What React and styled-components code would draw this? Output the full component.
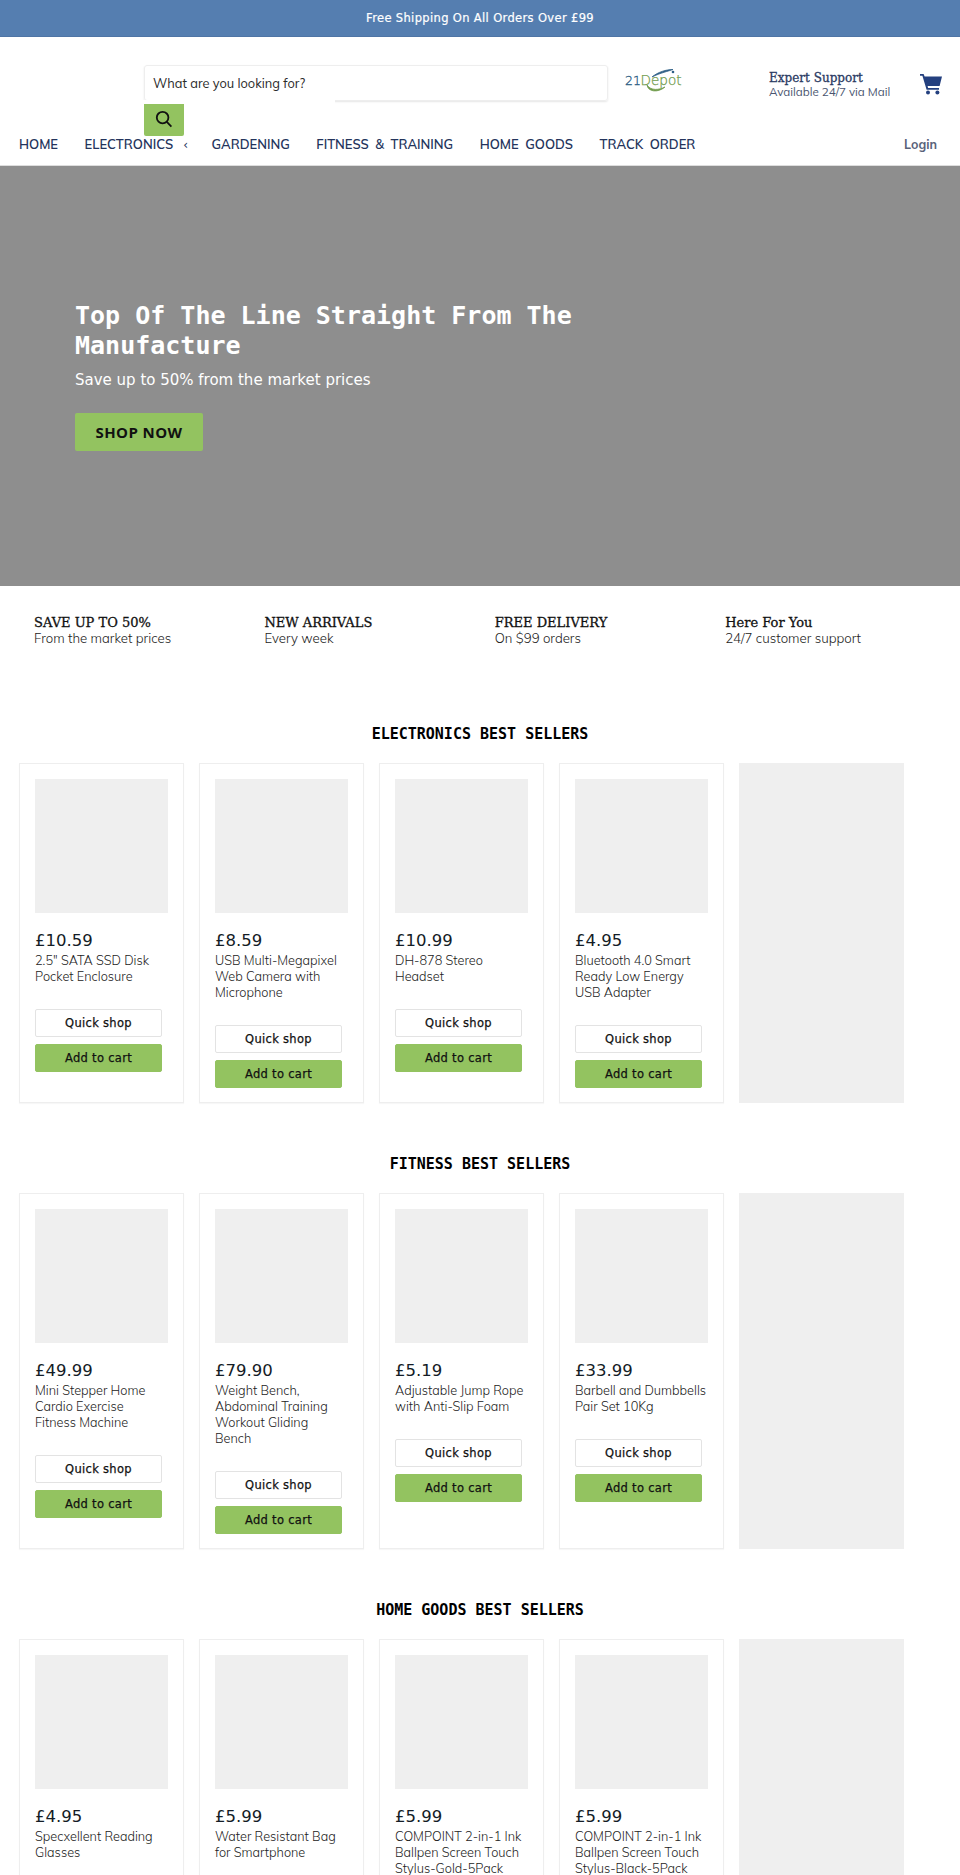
import React from "react";
import styled, { createGlobalStyle } from "styled-components";

const GlobalStyle = createGlobalStyle`
  html, body {
    margin: 0;
    padding: 0;
    background: #fff;
  }
  * {
    box-sizing: border-box;
  }
`;

const Page = styled.div`
  width: 960px;
  height: 1875px;
  overflow: hidden;
  font-family: "Mulish", "DejaVu Sans", sans-serif;
  font-weight: 300;
  color: #111;
`;

const TopBar = styled.div`
  height: 37px;
  background: #557eb0;
  border-bottom: 1px solid #4f75a5;
  color: #fff;
  font-family: "DejaVu Sans", sans-serif;
  font-size: 11.5px;
  font-weight: 400;
  -webkit-text-stroke: 0.2px #fff;
  letter-spacing: 0.35px;
  display: flex;
  align-items: center;
  justify-content: center;
`;

const Header = styled.header`
  height: 100px;
  padding: 28px 23px 0 144px;
  display: flex;
  align-items: flex-start;
`;

const SearchForm = styled.form`
  width: 464px;
  flex: none;
`;

const SearchField = styled.div`
  position: relative;
  height: 36px;
  border: 1px solid #eee;
  border-radius: 3px;
  box-shadow: 0 1px 2px rgba(0, 0, 0, 0.1);
  padding-left: 8px;
  display: flex;
  align-items: center;
  font-size: 12.8px;
  font-weight: 400;
  color: #2a2a2a;

  &::after {
    content: "";
    position: absolute;
    left: -2px;
    bottom: -4px;
    width: 192px;
    height: 4px;
    background: #fff;
  }
`;

const SearchButton = styled.button`
  display: flex;
  align-items: center;
  justify-content: center;
  width: 40px;
  height: 35px;
  border: 0;
  border-radius: 2px;
  background: #93c360;
  padding: 0;
  color: #111;
`;

const LogoBox = styled.div`
  width: 60px;
  margin: 3px 0 0 17px;
  flex: none;
`;

const Support = styled.div`
  margin: 6px 0 0 84px;
  width: 151px;
  flex: none;
`;

const SupportTitle = styled.div`
  font-family: "DejaVu Serif", serif;
  font-size: 12px;
  font-weight: 400;
  -webkit-text-stroke: 0.3px #2a3a63;
  line-height: 14px;
  color: #2a3a63;
`;

const SupportText = styled.div`
  font-size: 11.6px;
  font-weight: 400;
  line-height: 14px;
  color: #4a5570;
`;

const CartLink = styled.a`
  display: block;
  margin-top: 9px;
  color: #24407f;
`;

const Nav = styled.nav`
  height: 29px;
  padding: 0 23px 0 19px;
  display: flex;
  align-items: flex-start;
  border-bottom: 1px solid #ddd;
  position: relative;
`;

const NavItem = styled.a`
  font-size: 13px;
  font-weight: 600;
  line-height: 14px;
  word-spacing: 3px;
  margin-right: 26.5px;
  color: #24345c;
`;

const NavCaret = styled.span`
  margin: 0 -3px 0 10px;
  font-family: "DejaVu Sans", sans-serif;
  font-size: 12px;
  font-weight: 400;
`;

const LoginLink = styled.a`
  margin-left: auto;
  font-size: 12.5px;
  font-weight: 700;
  line-height: 14px;
  color: #59627a;
`;

const Hero = styled.section`
  height: 420px;
  background: #8e8e8e;
  padding: 135px 0 0 75px;
  color: #fff;
`;

const HeroTitle = styled.h1`
  margin: 0;
  width: 520px;
  font-family: "DejaVu Sans Mono", monospace;
  font-size: 25px;
  font-weight: 700;
  line-height: 30px;
`;

const HeroText = styled.p`
  margin: 7px 0 0;
  font-family: "DejaVu Sans", sans-serif;
  font-size: 15px;
  font-weight: 400;
  line-height: 24px;
`;

const HeroButton = styled.a`
  display: flex;
  align-items: center;
  justify-content: center;
  width: 128px;
  height: 38px;
  margin-top: 21px;
  border-radius: 2px;
  background: #93c360;
  color: #111;
  font-family: "Open Sans", sans-serif;
  font-size: 15px;
  font-weight: 700;
  letter-spacing: 0.4px;
`;

const Features = styled.section`
  display: grid;
  grid-template-columns: repeat(4, 230.4px);
  padding: 29px 0 0 34px;
  height: 87px;
`;

const FeatureTitle = styled.div`
  font-family: "DejaVu Serif", serif;
  font-size: 13px;
  font-weight: 400;
  -webkit-text-stroke: 0.3px #111;
  line-height: 15px;
  color: #111;
`;

const FeatureText = styled.div`
  font-size: 13.2px;
  line-height: 16px;
  color: #222;
`;

const Section = styled.section`
  padding: 51px 0 0 19px;
`;

const SectionTitle = styled.h2`
  margin: 0 0 19px -19px;
  font-family: "DejaVu Sans Mono", monospace;
  font-size: 15px;
  font-weight: 700;
  line-height: 20px;
  text-align: center;
  color: #000;
`;

const Row = styled.div`
  display: grid;
  grid-template-columns: repeat(5, 165px);
  column-gap: 15px;
`;

const Card = styled.article`
  border: 1px solid #eee;
  padding: 15px 15px 14px;
  box-shadow: 0 1px 1px rgba(0, 0, 0, 0.03);
`;

const Placeholder = styled.div`
  background: #efefef;
`;

const Thumb = styled(Placeholder)`
  width: 133px;
  height: 134px;
`;

const Price = styled.div`
  margin-top: 18px;
  font-family: "DejaVu Sans", sans-serif;
  font-size: 16.5px;
  font-weight: 400;
  line-height: 20px;
  color: #141c26;
`;

const Name = styled.div`
  margin-top: 1px;
  max-width: 132px;
  font-size: 12.7px;
  line-height: 16px;
  color: #222;
`;

const Button = styled.button`
  display: block;
  width: 127px;
  height: 28px;
  padding: 0;
  border: 1px solid ${(p) => (p.$primary ? "#93c360" : "#e3e3e3")};
  border-radius: 2px;
  background: ${(p) => (p.$primary ? "#93c360" : "#fff")};
  color: #111;
  font-family: "DejaVu Sans", sans-serif;
  font-size: 11.5px;
  -webkit-text-stroke: 0.25px #111;
  letter-spacing: 0.3px;
  margin-top: ${(p) => (p.$primary ? "7px" : "25px")};
`;

const sections = [
  {
    title: "ELECTRONICS BEST SELLERS",
    products: [
      ["£10.59", '2.5" SATA SSD Disk Pocket Enclosure'],
      ["£8.59", "USB Multi-Megapixel Web Camera with Microphone"],
      ["£10.99", "DH-878 Stereo Headset"],
      ["£4.95", "Bluetooth 4.0 Smart Ready Low Energy USB Adapter"],
    ],
  },
  {
    title: "FITNESS BEST SELLERS",
    products: [
      ["£49.99", "Mini Stepper Home Cardio Exercise Fitness Machine"],
      ["£79.90", "Weight Bench, Abdominal Training Workout Gliding Bench"],
      ["£5.19", "Adjustable Jump Rope with Anti-Slip Foam"],
      ["£33.99", "Barbell and Dumbbells Pair Set 10Kg"],
    ],
  },
  {
    title: "HOME GOODS BEST SELLERS",
    products: [
      ["£4.95", "Specxellent Reading Glasses"],
      ["£5.99", "Water Resistant Bag for Smartphone"],
      ["£5.99", "COMPOINT 2-in-1 Ink Ballpen Screen Touch Stylus-Gold-5Pack"],
      ["£5.99", "COMPOINT 2-in-1 Ink Ballpen Screen Touch Stylus-Black-5Pack"],
    ],
  },
];

const features = [
  ["SAVE UP TO 50%", "From the market prices"],
  ["NEW ARRIVALS", "Every week"],
  ["FREE DELIVERY", "On $99 orders"],
  ["Here For You", "24/7 customer support"],
];

const navItems = ["HOME", "ELECTRONICS", "GARDENING", "FITNESS & TRAINING", "HOME GOODS", "TRACK ORDER"];

function Logo() {
  return (
    <svg width="60" height="28" viewBox="0 0 60 28" fill="none">
      <text x="0" y="16.5" fontFamily="DejaVu Sans, sans-serif" fontSize="12.5" fill="#2f5f86" stroke="#2f5f86" strokeWidth="0.35">21</text>
      <text x="15.5" y="16.5" fontFamily="DejaVu Sans, sans-serif" fontSize="13.6" fill="#6e9a4a" stroke="#6e9a4a" strokeWidth="0.25">Depot</text>
      <path d="M27 9C33 4 41 1.5 48 1.5C44 3 35 5 27 9Z" fill="#2f5f86" stroke="#2f5f86" strokeWidth="0.8" />
      <circle cx="48" cy="4" r="1.3" fill="#2f5f86" />
      <path d="M22 17C23 24 33 25 40 19C34 22 26 23 22 17Z" fill="#6e9a4a" stroke="#6e9a4a" strokeWidth="0.8" />
    </svg>
  );
}

function CartIcon() {
  return (
    <svg width="22" height="21" viewBox="0 0 22 21" fill="currentColor">
      <path d="M0 0h3.6l1 2.6H22l-2.4 9.4H7.6l.5 2H19v1.8H6.6L2.4 1.8H0z" />
      <circle cx="8" cy="18.6" r="2" />
      <circle cx="17.4" cy="18.6" r="2" />
    </svg>
  );
}

function SearchIcon() {
  return (
    <svg width="18" height="18" viewBox="0 0 18 18" fill="none" stroke="currentColor" strokeWidth="1.8">
      <circle cx="7.6" cy="7.6" r="5.8" />
      <path d="M11.8 11.8 16.4 16.6" />
    </svg>
  );
}

function ProductCard({ price, name }) {
  return (
    <Card>
      <Thumb />
      <Price>{price}</Price>
      <Name>{name}</Name>
      <Button>Quick shop</Button>
      <Button $primary>Add to cart</Button>
    </Card>
  );
}

export default function App() {
  return (
    <Page>
      <GlobalStyle />
      <TopBar>Free Shipping On All Orders Over £99</TopBar>
      <Header>
        <SearchForm>
          <SearchField>What are you looking for?</SearchField>
          <SearchButton type="button" aria-label="Search">
            <SearchIcon />
          </SearchButton>
        </SearchForm>
        <LogoBox>
          <Logo />
        </LogoBox>
        <Support>
          <SupportTitle>Expert Support</SupportTitle>
          <SupportText>Available 24/7 via Mail</SupportText>
        </Support>
        <CartLink aria-label="Cart">
          <CartIcon />
        </CartLink>
      </Header>
      <Nav>
        {navItems.map((item) => (
          <NavItem key={item}>
            {item}
            {item === "ELECTRONICS" && <NavCaret>‹</NavCaret>}
          </NavItem>
        ))}
        <LoginLink>Login</LoginLink>
      </Nav>
      <Hero>
        <HeroTitle>Top Of The Line Straight From The Manufacture</HeroTitle>
        <HeroText>Save up to 50% from the market prices</HeroText>
        <HeroButton>SHOP NOW</HeroButton>
      </Hero>
      <Features>
        {features.map(([title, text]) => (
          <div key={title}>
            <FeatureTitle>{title}</FeatureTitle>
            <FeatureText>{text}</FeatureText>
          </div>
        ))}
      </Features>
      {sections.map((section) => (
        <Section key={section.title}>
          <SectionTitle>{section.title}</SectionTitle>
          <Row>
            {section.products.map(([price, name]) => (
              <ProductCard key={name} price={price} name={name} />
            ))}
            <Placeholder />
          </Row>
        </Section>
      ))}
    </Page>
  );
}
